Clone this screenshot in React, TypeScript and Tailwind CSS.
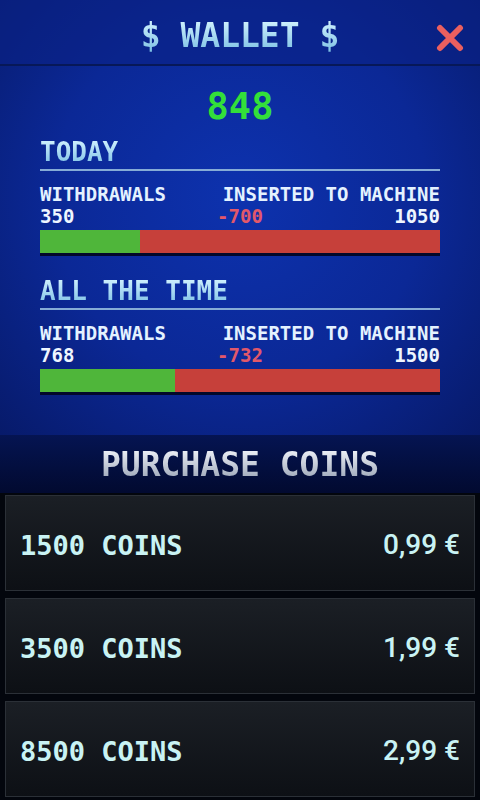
import { } from 'react';

type Stat = {
  title: string;
  withdrawals: number;
  inserted: number;
};

const stats: Stat[] = [
  { title: 'TODAY', withdrawals: 350, inserted: 1050 },
  { title: 'ALL THE TIME', withdrawals: 768, inserted: 1500 },
];

const packs = [
  { coins: 1500, price: '0,99 €' },
  { coins: 3500, price: '1,99 €' },
  { coins: 8500, price: '2,99 €' },
];

const mono = "font-['DejaVu_Sans_Mono',monospace] font-bold";

function StatBlock({ stat }: { stat: Stat }) {
  // share of withdrawals against everything that went through the machine
  const pct = (stat.withdrawals / (stat.inserted + stat.withdrawals)) * 100;
  return (
    <div className="px-[40px]">
      <div
        className={`${mono} h-[26px] text-[26px] leading-[26px] bg-gradient-to-b from-[#d2f2ff] to-[#7fc2e6] bg-clip-text text-transparent`}
      >
        {stat.title}
      </div>
      <div className="mt-[4px] h-[2px] bg-[#86acd6]" />
      <div className={`${mono} mt-[14px] flex h-[19px] justify-between text-[19px] leading-[19px] text-[#e4f2ff]`}>
        <span>WITHDRAWALS</span>
        <span>INSERTED TO MACHINE</span>
      </div>
      <div className={`${mono} mt-[3px] grid h-[19px] grid-cols-3 text-[19px] leading-[19px]`}>
        <span className="text-[#eef6ff]">{stat.withdrawals}</span>
        <span className="text-center text-[#e2586a]">
          -{stat.inserted - stat.withdrawals}
        </span>
        <span className="text-right text-[#eef6ff]">{stat.inserted}</span>
      </div>
      <div className="mt-[4px] flex h-[23px] bg-[#c6403a] shadow-[0_3px_0_#02082a]">
        <div className="h-full bg-[#4fb63a]" style={{ width: `${pct}%` }} />
      </div>
    </div>
  );
}

export default function App() {
  return (
    <div className="flex h-[800px] w-[480px] flex-col overflow-hidden bg-[#03060d]">
      <div className="h-[435px] bg-[radial-gradient(ellipse_at_50%_45%,#0d32ae_0%,#0b2896_55%,#071a6a_100%)]">
        <div className="relative flex h-[66px] items-center justify-center border-b-2 border-[#071858] bg-[#0a2286]/60 pt-[6px]">
          <span
            className={`${mono} text-[33px] leading-none bg-gradient-to-b from-[#d4f4ff] to-[#7cc0e4] bg-clip-text text-transparent`}
          >
            $ WALLET $
          </span>
          <svg
            className="absolute right-[16px] top-[24px]"
            width="28"
            height="28"
            viewBox="0 0 28 28"
          >
            <path
              d="M4 4 L24 24 M24 4 L4 24"
              stroke="#ea5f5f"
              strokeWidth="6"
              strokeLinecap="round"
            />
          </svg>
        </div>
        <div className={`${mono} mt-[22px] h-[37px] text-center text-[37px] leading-[37px] text-[#33df3a]`}>
          848
        </div>
        <div className="mt-[14px] flex flex-col gap-[25px]">
          {stats.map((s) => (
            <StatBlock key={s.title} stat={s} />
          ))}
        </div>
      </div>

      <div className="flex h-[58px] items-center justify-center bg-gradient-to-b from-[#051452] to-[#020a30]">
        <span
          className={`${mono} text-[33px] leading-none bg-gradient-to-b from-[#f2f5fb] to-[#9aa4b6] bg-clip-text text-transparent`}
        >
          PURCHASE COINS
        </span>
      </div>

      <div className="mt-[2px] flex flex-col gap-[7px] px-[5px]">
        {packs.map((p) => (
          <div
            key={p.coins}
            className="flex h-[96px] items-center justify-between border border-[#2b3037] bg-gradient-to-b from-[#1b1f25] to-[#0d1015] pl-[14px] pr-[14px] pt-[4px]"
          >
            <span className={`${mono} text-[27px] leading-none text-[#c9f3f4]`}>
              {p.coins} COINS
            </span>
            <span className="font-['Roboto',sans-serif] text-[28px] font-medium leading-none text-[#c9f3f4]">
              {p.price}
            </span>
          </div>
        ))}
      </div>
    </div>
  );
}
